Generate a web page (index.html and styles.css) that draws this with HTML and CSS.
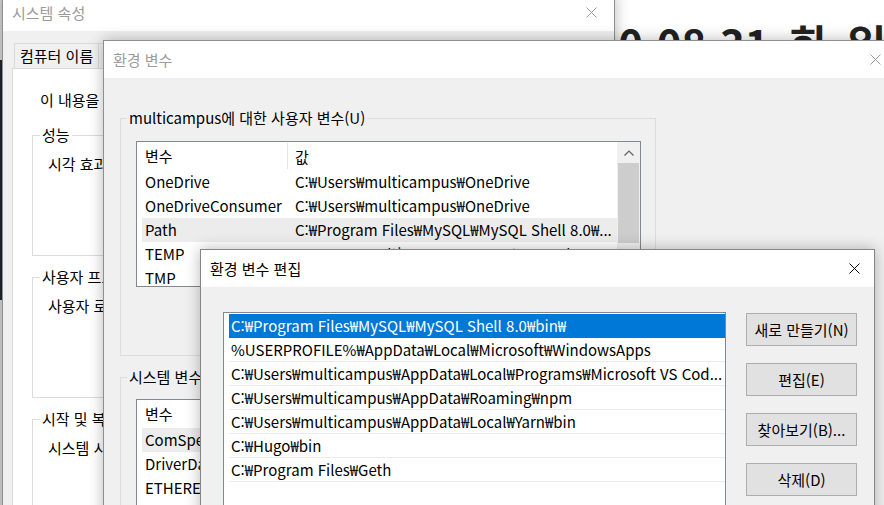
FILE: index.html
```html
<!DOCTYPE html>
<html lang="ko">
<head>
<meta charset="utf-8">
<title>환경 변수 편집</title>
<link rel="stylesheet" href="styles.css">
</head>
<body>
<div class="desktop">
  <div class="bgapp"><div class="date">2020.08.31 화 일</div></div>

  <section class="win win-sys">
    <header class="titlebar">
      <span class="title">시스템 속성</span>
      <svg class="close" viewBox="0 0 11 11"><path d="M0.5 0.5L10.5 10.5M10.5 0.5L0.5 10.5"/></svg>
    </header>
    <div class="sys-body">
      <div class="tabs">
        <span class="tab">컴퓨터 이름</span>
        <span class="tab">하드웨어</span>
        <span class="tab sel">고급</span>
        <span class="tab">시스템 보호</span>
        <span class="tab">원격</span>
      </div>
      <div class="panel">
        <p class="note">이 내용을 변경하려면 관리자로 로그온해야 합니다.</p>
        <fieldset class="grp">
          <legend>성능</legend>
          <p>시각 효과, 프로세서 일정, 메모리 사용 및 가상 메모리</p>
        </fieldset>
        <fieldset class="grp">
          <legend>사용자 프로필</legend>
          <p>사용자 로그인에 관련된 바탕 화면 설정</p>
        </fieldset>
        <fieldset class="grp">
          <legend>시작 및 복구</legend>
          <p>시스템 시작, 시스템 오류 및 디버깅 정보</p>
        </fieldset>
      </div>
    </div>
  </section>

  <section class="win win-env">
    <header class="titlebar">
      <span class="title">환경 변수</span>
      <svg class="close" viewBox="0 0 11 11"><path d="M0.5 0.5L10.5 10.5M10.5 0.5L0.5 10.5"/></svg>
    </header>
    <div class="env-body">
      <fieldset class="vgrp user">
        <legend>multicampus에 대한 사용자 변수(U)</legend>
        <div class="vlist">
          <div class="vcontent">
            <div class="vhead"><span class="hc1">변수</span><span class="hc2">값</span></div>
            <div class="vrow"><span class="n">OneDrive</span><span class="v">C:₩Users₩multicampus₩OneDrive</span></div>
            <div class="vrow"><span class="n">OneDriveConsumer</span><span class="v">C:₩Users₩multicampus₩OneDrive</span></div>
            <div class="vrow hl"><span class="n">Path</span><span class="v">C:₩Program Files₩MySQL₩MySQL Shell 8.0₩...</span></div>
            <div class="vrow"><span class="n">TEMP</span><span class="v">C:₩Users₩multicampus₩AppData₩Local₩Temp</span></div>
            <div class="vrow"><span class="n">TMP</span><span class="v">C:₩Users₩multicampus₩AppData₩Local₩Temp</span></div>
          </div>
          <div class="sbar">
            <div class="sb-btn"><svg viewBox="0 0 10 6"><path d="M0.5 5.5L5 1L9.5 5.5"/></svg></div>
            <div class="sb-thumb"></div>
          </div>
        </div>
        <div class="vbtns"><button>새로 만들기(N)...</button><button>편집(E)...</button><button>삭제(D)</button></div>
      </fieldset>
      <fieldset class="vgrp sys">
        <legend>시스템 변수(S)</legend>
        <div class="vlist">
          <div class="vcontent">
            <div class="vhead"><span class="hc1">변수</span><span class="hc2">값</span></div>
            <div class="vrow hl"><span class="n">ComSpec</span><span class="v">C:₩WINDOWS₩system32₩cmd.exe</span></div>
            <div class="vrow"><span class="n">DriverData</span><span class="v">C:₩Windows₩System32₩Drivers₩DriverData</span></div>
            <div class="vrow"><span class="n">ETHEREUM_SOCKET</span><span class="v">₩₩.₩pipe₩geth.ipc</span></div>
          </div>
          <div class="sbar">
            <div class="sb-btn"><svg viewBox="0 0 10 6"><path d="M0.5 5.5L5 1L9.5 5.5"/></svg></div>
            <div class="sb-thumb"></div>
          </div>
        </div>
      </fieldset>
    </div>
  </section>

  <section class="win win-edit">
    <header class="titlebar">
      <span class="title">환경 변수 편집</span>
      <svg class="close" viewBox="0 0 11 11"><path d="M0.5 0.5L10.5 10.5M10.5 0.5L0.5 10.5"/></svg>
    </header>
    <div class="edit-body">
      <div class="plist">
        <div class="prow sel">C:₩Program Files₩MySQL₩MySQL Shell 8.0₩bin₩</div>
        <div class="prow">%USERPROFILE%₩AppData₩Local₩Microsoft₩WindowsApps</div>
        <div class="prow">C:₩Users₩multicampus₩AppData₩Local₩Programs₩Microsoft VS Cod...</div>
        <div class="prow">C:₩Users₩multicampus₩AppData₩Roaming₩npm</div>
        <div class="prow">C:₩Users₩multicampus₩AppData₩Local₩Yarn₩bin</div>
        <div class="prow">C:₩Hugo₩bin</div>
        <div class="prow">C:₩Program Files₩Geth</div>
        <div class="prow"></div>
      </div>
      <div class="ebtns">
        <button>새로 만들기(N)</button>
        <button>편집(E)</button>
        <button>찾아보기(B)...</button>
        <button>삭제(D)</button>
      </div>
    </div>
  </section>
</div>
</body>
</html>
```

FILE: styles.css
```css
* { box-sizing: border-box; }
html, body { margin: 0; padding: 0; }
body {
  width: 884px;
  height: 505px;
  overflow: hidden;
  font-family: "Noto Sans CJK KR", "Noto Sans", sans-serif;
  font-size: 15px;
  color: #000;
  background: #1f2634;
}
.desktop {
  position: relative;
  width: 884px;
  height: 505px;
  overflow: hidden;
  background: linear-gradient(#d8d8d8 0 60px, #1f2634 60px 300px, #d8d8d8 300px);
}

/* background application */
.bgapp {
  position: absolute;
  left: 540px;
  top: 0;
  width: 344px;
  height: 40px;
  background: #fff;
  overflow: hidden;
}
.date {
  font-size: 42px;
  font-weight: 700;
  color: #222;
  line-height: 1;
  padding: 22px 0 0 4px;
  word-spacing: 8px;
  white-space: nowrap;
}

/* generic window */
.win {
  position: absolute;
  border: 1px solid #8f8f8f;
  background: #f0f0f0;
  box-shadow: 0 0 14px rgba(0, 0, 0, 0.28);
  display: flex;
  flex-direction: column;
  overflow: hidden;
}
.titlebar {
  flex: none;
  height: 37px;
  background: #fff;
  display: flex;
  align-items: center;
  padding-left: 9px;
}
.title {
  flex: 1;
  color: #9b9b9b;
  line-height: 22px;
  white-space: nowrap;
}
.close {
  width: 11px;
  height: 11px;
  margin-right: 14px;
  fill: none;
  stroke: #9b9b9b;
  stroke-width: 1;
}
.win-sys { left: 2px; top: -7px; width: 613px; height: 530px; }
.win-sys .close { margin-right: 17px; }
.win-env { left: 103px; top: 40px; width: 793px; height: 500px; }
.win-edit { left: 200px; top: 249px; width: 675px; height: 300px; border-color: #858585; }
.win-edit .title { color: #000; }
.win-edit .close { stroke: #000; }

/* system properties */
.sys-body { padding: 12px 9px 0; }
.tabs { display: flex; margin-left: 2px; height: 25px; }
.tab {
  border: 1px solid #d9d9d9;
  border-bottom: none;
  padding: 0 5px;
  line-height: 23px;
  background: #f0f0f0;
  margin-right: -1px;
  white-space: nowrap;
}
.tab.sel { background: #fff; }
.panel {
  background: #fff;
  border: 1px solid #d9d9d9;
  padding: 20px 19px 0;
  height: 460px;
}
.note { margin: 0 0 0 8px; line-height: 22px; white-space: nowrap; }
.grp {
  margin: 13px 0 0;
  padding: 7px 0 80px;
  border: 1px solid #dcdcdc;
  min-width: 0;
}
.grp + .grp { margin-top: 10px; }
.grp p { margin: 0 0 0 15px; line-height: 22px; white-space: nowrap; }
legend { margin-left: 7px; padding: 0 2px; line-height: 22px; white-space: nowrap; }

/* environment variables */
.env-body { padding: 29px 0 0 16px; }
.vgrp {
  width: 536px;
  margin: 0;
  padding: 12px 0 24px;
  border: 1px solid #dcdcdc;
  min-width: 0;
}
.vgrp legend { margin-left: 6px; }
.vgrp.sys { margin-top: 10px; padding-top: 11px; }
.vlist {
  margin-left: 15px;
  width: 505px;
  height: 146px;
  border: 1px solid #828790;
  background: #fff;
  display: flex;
  overflow: hidden;
}
.vcontent { flex: 1; min-width: 0; }
.vhead { display: flex; height: 28px; align-items: center; }
.hc1 {
  width: 151px;
  padding-left: 8px;
  border-right: 1px solid #e5e5e5;
  line-height: 26px;
}
.hc2 { padding-left: 7px; }
.vrow {
  display: grid;
  grid-template-columns: 145px 1fr;
  height: 24px;
  line-height: 24px;
  margin-left: 5px;
  white-space: nowrap;
}
.vrow.hl { background: #ececec; }
.vrow .n { padding-left: 3px; overflow: hidden; }
.vrow .v { padding: 0 2px 0 8px; overflow: hidden; }
.sbar { width: 23px; background: #f0f0f0; flex: none; }
.sb-btn { height: 21px; display: flex; align-items: center; justify-content: center; }
.sb-btn svg { width: 10px; height: 6px; fill: none; stroke: #606060; stroke-width: 1.2; }
.sb-thumb { height: 80px; margin: 0 1px; background: #cdcdcd; }
.vbtns { display: flex; justify-content: flex-end; gap: 8px; margin: 11px 0 0; padding-right: 14px; }
.vbtns button, .ebtns button {
  font: inherit;
  color: #000;
  background: #e1e1e1;
  border: 1px solid #adadad;
  height: 33px;
  padding: 0;
}
.vbtns button { width: 111px; }

/* edit environment variable */
.edit-body { display: flex; padding: 25px 0 0 22px; }
.plist {
  width: 503px;
  height: 260px;
  flex: none;
  border: 1px solid #828790;
  background: #fff;
  padding: 1px 0 0 5px;
}
.prow {
  height: 24px;
  line-height: 23px;
  padding: 0 4px 0 2px;
  border-bottom: 1px solid #ebebeb;
  white-space: nowrap;
  overflow: hidden;
}
.prow.sel { background: #0078d7; color: #fff; border-bottom-color: #0078d7; }
.ebtns {
  display: flex;
  flex-direction: column;
  gap: 17px;
  margin: 1px 0 0 20px;
}
.ebtns button { width: 111px; }
```
